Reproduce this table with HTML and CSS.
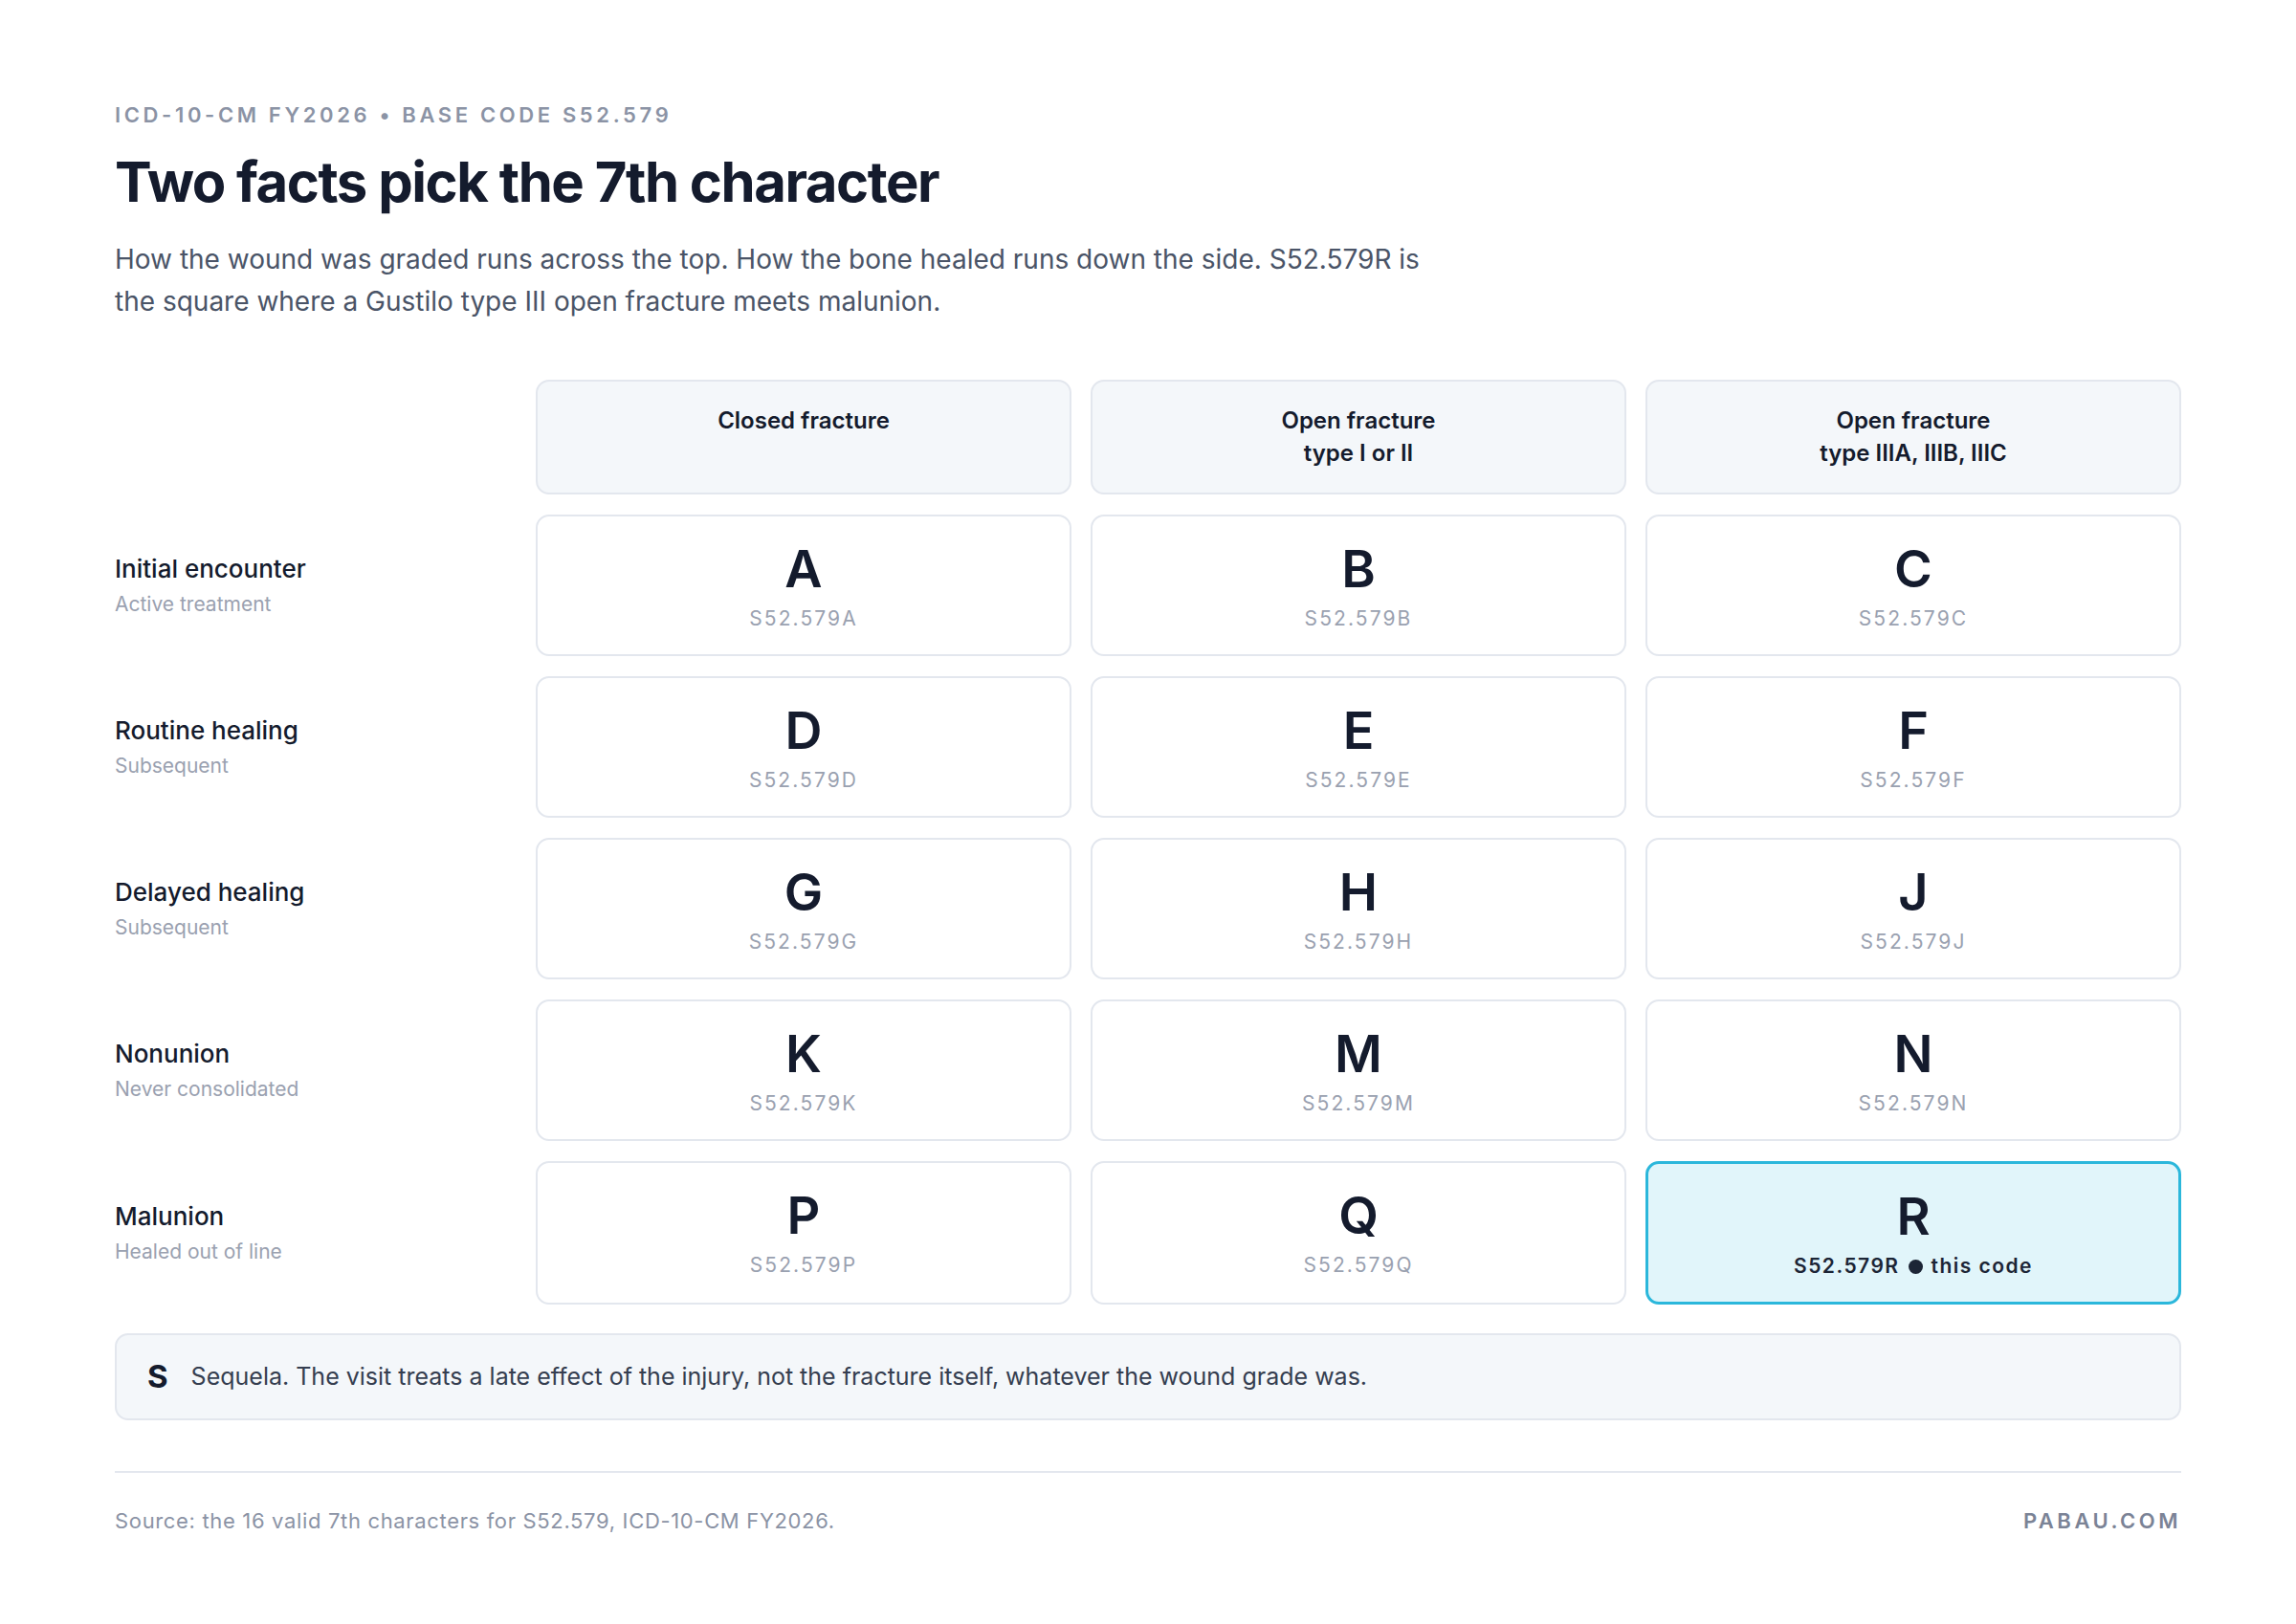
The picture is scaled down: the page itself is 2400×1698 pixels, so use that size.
FILE: index.html
```html
<!DOCTYPE html>
<html lang="en">
  <head>
    <meta charset="UTF-8" />
    <meta name="viewport" content="width=device-width, initial-scale=1.0" />
    <title>Two facts pick the 7th character | S52.579</title>
    <link rel="stylesheet" href="styles.css">
  </head>
  <body>
    <main class="page">
      <p class="eyebrow">ICD-10-CM FY2026 • BASE CODE S52.579</p>
      <h1 class="title">Two facts pick the 7th character</h1>
      <p class="lead">
        How the wound was graded runs across the top. How the bone healed runs down the side. S52.579R is
        the square where a Gustilo type III open fracture meets malunion.
      </p>

      <div class="grid">
        <div class="corner"></div>
        <div class="col-head">Closed fracture</div>
        <div class="col-head">Open fracture<br>type I or II</div>
        <div class="col-head">Open fracture<br>type IIIA, IIIB, IIIC</div>

        <div class="row-head">
          <div class="row-name">Initial encounter</div>
          <div class="row-note">Active treatment</div>
        </div>
        <div class="cell"><span class="letter">A</span><span class="code">S52.579A</span></div>
        <div class="cell"><span class="letter">B</span><span class="code">S52.579B</span></div>
        <div class="cell"><span class="letter">C</span><span class="code">S52.579C</span></div>

        <div class="row-head">
          <div class="row-name">Routine healing</div>
          <div class="row-note">Subsequent</div>
        </div>
        <div class="cell"><span class="letter">D</span><span class="code">S52.579D</span></div>
        <div class="cell"><span class="letter">E</span><span class="code">S52.579E</span></div>
        <div class="cell"><span class="letter">F</span><span class="code">S52.579F</span></div>

        <div class="row-head">
          <div class="row-name">Delayed healing</div>
          <div class="row-note">Subsequent</div>
        </div>
        <div class="cell"><span class="letter">G</span><span class="code">S52.579G</span></div>
        <div class="cell"><span class="letter">H</span><span class="code">S52.579H</span></div>
        <div class="cell"><span class="letter">J</span><span class="code">S52.579J</span></div>

        <div class="row-head">
          <div class="row-name">Nonunion</div>
          <div class="row-note">Never consolidated</div>
        </div>
        <div class="cell"><span class="letter">K</span><span class="code">S52.579K</span></div>
        <div class="cell"><span class="letter">M</span><span class="code">S52.579M</span></div>
        <div class="cell"><span class="letter">N</span><span class="code">S52.579N</span></div>

        <div class="row-head">
          <div class="row-name">Malunion</div>
          <div class="row-note">Healed out of line</div>
        </div>
        <div class="cell"><span class="letter">P</span><span class="code">S52.579P</span></div>
        <div class="cell"><span class="letter">Q</span><span class="code">S52.579Q</span></div>
        <div class="cell cell-active">
          <span class="letter">R</span>
          <span class="code">S52.579R <span class="dot"></span> this code</span>
        </div>
      </div>

      <div class="sequela">
        <span class="sequela-letter">S</span>
        <span class="sequela-text">Sequela. The visit treats a late effect of the injury, not the fracture itself, whatever the wound grade was.</span>
      </div>

      <footer class="footer">
        <span class="source">Source: the 16 valid 7th characters for S52.579, ICD-10-CM FY2026.</span>
        <span class="brand">PABAU.COM</span>
      </footer>
    </main>
  </body>
</html>
```

FILE: styles.css
```css
:root {
  --ink: #141b2d;
  --muted: #8b93a5;
  --line: #e3e7ee;
  --soft: #f4f7fa;
  --accent: #2bb7db;
  --accent-bg: #e1f5fa;
}

body {
  margin: 0;
  background: #ffffff;
  color: var(--ink);
  font-family: Inter, "Liberation Sans", sans-serif;
}

.page {
  padding: 107px 120px 60px;
}

.eyebrow {
  margin: 0;
  font-size: 22px;
  line-height: 26px;
  font-weight: 600;
  letter-spacing: 0.165em;
  color: var(--muted);
}

.title {
  margin: 22px 0 0;
  font-size: 58px;
  line-height: 70px;
  font-weight: 700;
  letter-spacing: -0.025em;
  color: var(--ink);
}

.lead {
  margin: 24px 0 0;
  max-width: 1390px;
  font-size: 28px;
  line-height: 44px;
  color: #4a5467;
}

.grid {
  display: grid;
  grid-template-columns: 420px repeat(3, 1fr);
  column-gap: 20px;
  row-gap: 21px;
  margin-top: 60px;
}

.col-head {
  background: var(--soft);
  border: 2px solid var(--line);
  border-radius: 14px;
  padding: 24px 20px 24px;
  text-align: center;
  font-size: 24px;
  line-height: 34px;
  font-weight: 600;
  color: var(--ink);
}

.row-head {
  align-self: center;
}
.row-name {
  font-size: 26px;
  line-height: 36px;
  font-weight: 500;
  color: var(--ink);
}
.row-note {
  margin-top: 4px;
  font-size: 21px;
  line-height: 30px;
  color: #9aa1b0;
}

.cell {
  display: flex;
  flex-direction: column;
  align-items: center;
  border: 2px solid var(--line);
  border-radius: 14px;
  padding: 25px 20px 22px;
  background: #ffffff;
}
.letter {
  font-size: 54px;
  line-height: 60px;
  font-weight: 600;
  color: var(--ink);
}
.code {
  margin-top: 7px;
  font-size: 21px;
  line-height: 30px;
  letter-spacing: 0.1em;
  color: #9aa1b0;
}

.cell-active {
  border: 3px solid var(--accent);
  background: var(--accent-bg);
  padding: 25px 19px 22px;
}
.cell-active .code {
  display: flex;
  align-items: center;
  gap: 9px;
  font-weight: 600;
  letter-spacing: 0.07em;
  color: #1c2536;
}
.dot {
  width: 15px;
  height: 15px;
  border-radius: 50%;
  background: #1c2536;
}

.sequela {
  display: flex;
  align-items: center;
  gap: 24px;
  margin-top: 30px;
  padding: 22px 32px;
  background: var(--soft);
  border: 2px solid var(--line);
  border-radius: 14px;
}
.sequela-letter {
  font-size: 33px;
  line-height: 43px;
  font-weight: 700;
  color: var(--ink);
}
.sequela-text {
  font-size: 25px;
  line-height: 43px;
  color: #353e50;
}

.footer {
  display: flex;
  justify-content: space-between;
  align-items: center;
  margin-top: 53px;
  padding-top: 35px;
  border-top: 2px solid var(--line);
  font-size: 22px;
  line-height: 30px;
}
.source {
  letter-spacing: 0.03em;
  color: var(--muted);
}
.brand {
  font-weight: 600;
  letter-spacing: 0.16em;
  color: #7b8396;
}
```
